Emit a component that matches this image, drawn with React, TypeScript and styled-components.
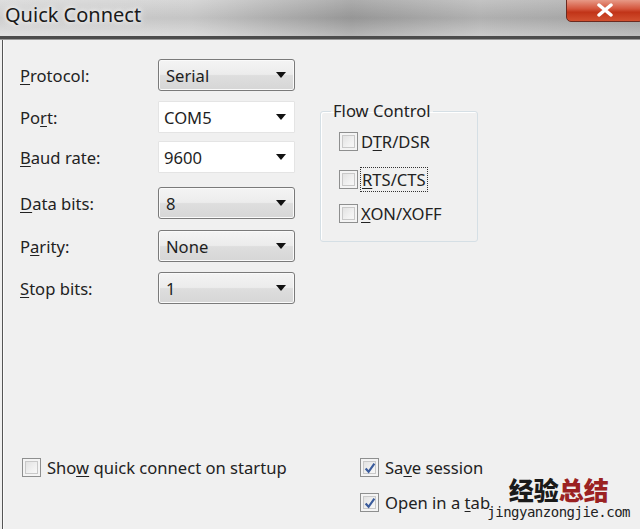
import React from "react";
import styled, { createGlobalStyle } from "styled-components";

const Global = createGlobalStyle`
  html, body { margin: 0; padding: 0; background: #f0f0f0; }
  #root { width: 640px; height: 529px; overflow: hidden; }
`;

const FS = "16.6px";

const Window = styled.div`
  width: 640px;
  height: 529px;
  display: flex;
  flex-direction: column;
  font-family: "Noto Sans", "Liberation Sans", sans-serif;
  color: #1e1e1e;
  position: relative;
  overflow: hidden;
`;

const TitleBar = styled.div`
  height: 36px;
  flex: none;
  display: flex;
  justify-content: space-between;
  align-items: flex-start;
  background: linear-gradient(90deg, #d8d8d8 0%, #cfcfcf 30%, #9e9e9e 55%, #b9b9b9 75%, #a8a8a8 100%);
  border-bottom: 3px solid #4c4c4c;
  box-shadow: 0 1px 0 #9a9a9a;
  position: relative;
`;

const TitleShade = styled.div`
  position: absolute;
  inset: 0;
  background: linear-gradient(180deg, rgba(255,255,255,0.15) 0%, rgba(0,0,0,0.05) 50%, rgba(255,255,255,0.25) 100%);
  pointer-events: none;
`;

const Title = styled.div`
  font-size: 20px;
  line-height: 20px;
  padding: 5px 0 0 5px;
  color: #1a1a1a;
  text-shadow: 0 0 8px #fff, 0 0 4px #fff;
  position: relative;
`;

const CloseButton = styled.div`
  width: 76px;
  height: 22px;
  margin-top: -2px;
  margin-right: -4px;
  border: 1px solid #6b2a20;
  border-radius: 0 0 5px 5px;
  background: linear-gradient(180deg, #e9a18f 0%, #d4553c 45%, #c13418 60%, #d2502f 100%);
  display: flex;
  align-items: center;
  justify-content: center;
  position: relative;
`;

const Client = styled.div`
  flex: 1;
  margin-left: 2px;
  margin-top: 1px;
  border-left: 1px solid #555;
  box-shadow: inset 1px 0 0 #fbfbfb;
  background: #f0f0f0;
  display: flex;
  flex-direction: column;
  padding: 19px 0 0 17px;
`;

const Top = styled.div`
  display: flex;
  align-items: flex-start;
`;

const Form = styled.div`
  display: grid;
  grid-template-columns: 138px 137px;
  align-items: center;
`;

const Label = styled.div<{ $mt: number }>`
  font-size: ${FS};
  margin-top: ${(p) => p.$mt}px;
  color: #222;
`;

const U = styled.span`
  text-decoration: underline;
  text-underline-offset: 2px;
`;

const Combo = styled.div<{ $mt: number; $edit?: boolean }>`
  margin-top: ${(p) => p.$mt}px;
  height: 32px;
  box-sizing: border-box;
  display: flex;
  align-items: center;
  justify-content: space-between;
  padding: 0 8px 0 ${(p) => (p.$edit ? 5 : 7)}px;
  font-size: ${FS};
  color: #1e1e1e;
  border-radius: ${(p) => (p.$edit ? 1 : 3)}px;
  border: 1px solid ${(p) => (p.$edit ? "#e4e4e4" : "#7a7a7a")};
  background: ${(p) =>
    p.$edit
      ? "#ffffff"
      : "linear-gradient(180deg, #f4f4f4 0%, #ececec 48%, #dedede 52%, #d6d6d6 100%)"};
  box-shadow: ${(p) => (p.$edit ? "none" : "inset 0 0 0 1px #fafafa")};
`;

const Arrow = styled.span`
  width: 0;
  height: 0;
  border-left: 5px solid transparent;
  border-right: 5px solid transparent;
  border-top: 6px solid #111;
`;

const Group = styled.fieldset`
  margin: 43px 0 0 25px;
  width: 158px;
  height: 140px;
  box-sizing: border-box;
  border: 1px solid #d5dfe5;
  border-radius: 3px;
  box-shadow: inset 1px 1px 0 #fff;
  padding: 0 0 0 18px;
  display: flex;
  flex-direction: column;
`;

const Legend = styled.legend`
  font-size: ${FS};
  padding: 0 2px;
  margin-left: -8px;
  color: #222;
  line-height: 18px;
`;

const CheckRow = styled.label<{ $mt: number; $gap: number }>`
  display: flex;
  align-items: center;
  gap: ${(p) => p.$gap}px;
  font-size: ${FS};
  color: #222;
  margin-top: ${(p) => p.$mt}px;
`;

const Box = styled.span`
  width: 19px;
  height: 19px;
  box-sizing: border-box;
  border: 1px solid #8e8f8f;
  background: linear-gradient(135deg, #dcdcdc 0%, #f2f2f2 60%, #fbfbfb 100%);
  box-shadow: inset 0 0 0 2px #f4f4f4, inset 0 0 0 3px #c9c9c9;
  display: flex;
  align-items: center;
  justify-content: center;
  flex: none;
`;

const Focus = styled.span`
  outline: 1px dotted #333;
  outline-offset: 0px;
  padding: 0 1px;
`;

const Bottom = styled.div`
  margin-top: auto;
  margin-bottom: 15px;
  display: grid;
  grid-template-columns: 338px auto;
  padding-left: 2px;
  row-gap: 12px;
`;

const Watermark = styled.div`
  position: absolute;
  right: 10px;
  bottom: 8px;
  display: flex;
  flex-direction: column;
  align-items: center;
`;

const WmCn = styled.div`
  font-family: "Noto Sans CJK SC", sans-serif;
  font-weight: 900;
  font-size: 25px;
  line-height: 25px;
  margin-bottom: 2px;
  color: #1a1a1a;
`;

const WmRed = styled.span`
  color: #9b2222;
`;

const WmUrl = styled.div`
  font-family: "DejaVu Sans Mono", monospace;
  font-size: 14px;
  line-height: 17px;
  color: #222;
  letter-spacing: -0.5px;
`;

const Check = () => (
  <svg width="12" height="12" viewBox="0 0 11 11">
    <path d="M1.5 6 L4.2 9 L9.5 1.5" fill="none" stroke="#3b5c9c" strokeWidth="2" />
  </svg>
);

const Checkbox = ({ checked }: { checked?: boolean }) => <Box>{checked && <Check />}</Box>;

export default function App() {
  return (
    <>
      <Global />
      <Window>
        <TitleBar>
          <TitleShade />
          <Title>Quick Connect</Title>
          <CloseButton>
            <svg width="18" height="14" viewBox="0 0 18 14">
              <path d="M3 2 L15 12 M15 2 L3 12" stroke="#fff" strokeWidth="3.5" strokeLinecap="round" />
            </svg>
          </CloseButton>
        </TitleBar>
        <Client>
          <Top>
            <Form>
              <Label $mt={0}><U>P</U>rotocol:</Label>
              <Combo $mt={0}>Serial<Arrow /></Combo>
              <Label $mt={10}>Po<U>r</U>t:</Label>
              <Combo $mt={10} $edit>COM5<Arrow /></Combo>
              <Label $mt={8}><U>B</U>aud rate:</Label>
              <Combo $mt={8} $edit>9600<Arrow /></Combo>
              <Label $mt={14}><U>D</U>ata bits:</Label>
              <Combo $mt={14}>8<Arrow /></Combo>
              <Label $mt={11}>P<U>a</U>rity:</Label>
              <Combo $mt={11}>None<Arrow /></Combo>
              <Label $mt={10}><U>S</U>top bits:</Label>
              <Combo $mt={10}>1<Arrow /></Combo>
            </Form>
            <Group>
              <Legend>Flow Control</Legend>
              <CheckRow $mt={10} $gap={3}><Checkbox /><span>D<U>T</U>R/DSR</span></CheckRow>
              <CheckRow $mt={15} $gap={3}><Checkbox /><Focus><U>R</U>TS/CTS</Focus></CheckRow>
              <CheckRow $mt={11} $gap={3}><Checkbox /><span><U>X</U>ON/XOFF</span></CheckRow>
            </Group>
          </Top>
          <Bottom>
            <CheckRow $mt={0} $gap={6}><Checkbox /><span>Sho<U>w</U> quick connect on startup</span></CheckRow>
            <CheckRow $mt={0} $gap={6}><Checkbox checked /><span>Sa<U>v</U>e session</span></CheckRow>
            <span />
            <CheckRow $mt={0} $gap={6}><Checkbox checked /><span>Open in a <U>t</U>ab</span></CheckRow>
          </Bottom>
        </Client>
        <Watermark>
          <WmCn>经验<WmRed>总结</WmRed></WmCn>
          <WmUrl>jingyanzongjie.com</WmUrl>
        </Watermark>
      </Window>
    </>
  );
}
